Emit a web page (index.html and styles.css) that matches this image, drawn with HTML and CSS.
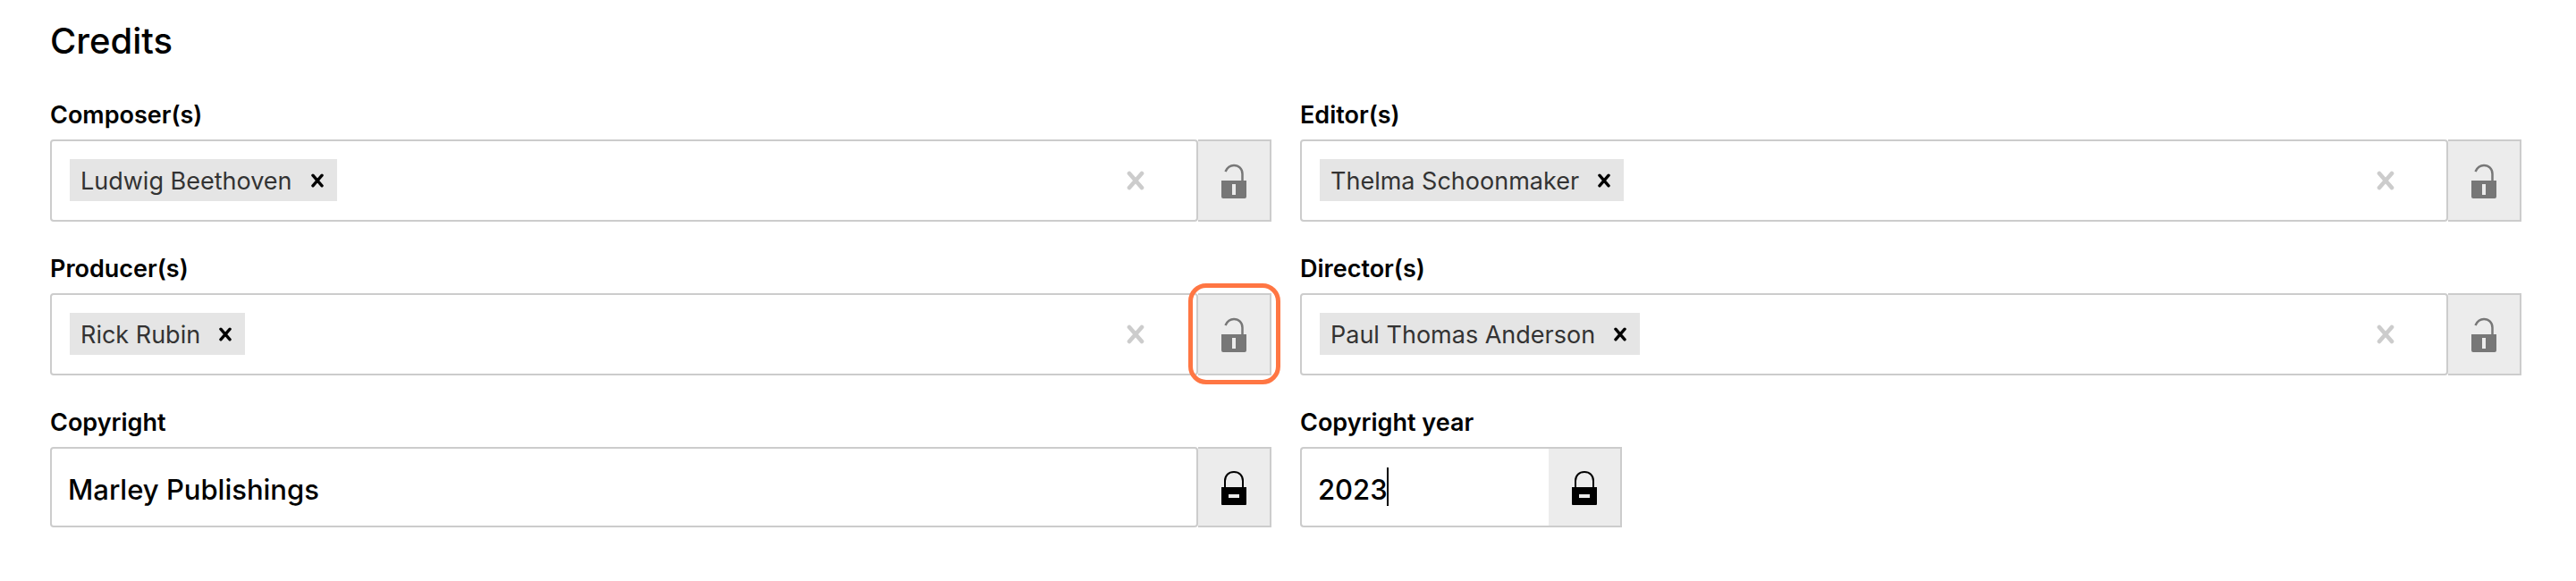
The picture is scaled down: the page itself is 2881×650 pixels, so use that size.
FILE: index.html
```html
<!DOCTYPE html>
<html lang="en">
	<head>
		<meta charset="utf-8">
		<title>Credits</title>
		<meta name="viewport" content="width=device-width,initial-scale=1">
		<link rel="stylesheet" href="styles.css">
	</head>
	<body>
		<!-- shared icons -->
		<svg class="sprite" aria-hidden="true">
			<symbol id="unlocked" viewBox="0 0 28 40">
				<path d="M4.500 10C6.500 5.500 10 3 14 3C19.500 3 23.500 7 23.500 12.500V21" fill="none" stroke="currentColor" stroke-width="2.500"/>
				<path d="M0 20H28V38Q28 40 26 40H2Q0 40 0 38ZM12 24V36H16V24Z" fill="currentColor" fill-rule="evenodd"/>
			</symbol>
			<symbol id="locked" viewBox="0 0 28 40">
				<path d="M4 21V13C4 7 8 3 14 3C20 3 24 7 24 13V21" fill="none" stroke="currentColor" stroke-width="2"/>
				<path d="M0 20H28V39Q28 40 27 40H1Q0 40 0 39ZM8 28V32H20V28Z" fill="currentColor" fill-rule="evenodd"/>
			</symbol>
			<symbol id="cross" viewBox="0 0 20 22">
				<path d="M3 3L17 19M17 3L3 19" fill="none" stroke="currentColor" stroke-width="4.600" stroke-linecap="round"/>
			</symbol>
		</svg>

		<form class="credits">
			<h1 class="title">Credits</h1>
			<div class="fields">
				<div class="field">
					<label class="label" for="composers">Composer(s)</label>
					<div class="row">
						<div class="control select">
							<span class="tag">Ludwig Beethoven<button type="button" class="remove" aria-label="Remove Ludwig Beethoven"><svg><use href="#cross"/></svg></button></span>
							<input class="search" id="composers" type="text">
							<button type="button" class="clear" aria-label="Clear composers"><svg><use href="#cross"/></svg></button>
						</div>
						<button type="button" class="lock" aria-label="Lock composers"><svg><use href="#unlocked"/></svg></button>
					</div>
				</div>

				<div class="field">
					<label class="label" for="editors">Editor(s)</label>
					<div class="row">
						<div class="control select">
							<span class="tag">Thelma Schoonmaker<button type="button" class="remove" aria-label="Remove Thelma Schoonmaker"><svg><use href="#cross"/></svg></button></span>
							<input class="search" id="editors" type="text">
							<button type="button" class="clear" aria-label="Clear editors"><svg><use href="#cross"/></svg></button>
						</div>
						<button type="button" class="lock" aria-label="Lock editors"><svg><use href="#unlocked"/></svg></button>
					</div>
				</div>

				<div class="field">
					<label class="label" for="producers">Producer(s)</label>
					<div class="row">
						<div class="control select">
							<span class="tag">Rick Rubin<button type="button" class="remove" aria-label="Remove Rick Rubin"><svg><use href="#cross"/></svg></button></span>
							<input class="search" id="producers" type="text">
							<button type="button" class="clear" aria-label="Clear producers"><svg><use href="#cross"/></svg></button>
						</div>
						<button type="button" class="lock highlight" aria-label="Lock producers"><svg><use href="#unlocked"/></svg></button>
					</div>
				</div>

				<div class="field">
					<label class="label" for="directors">Director(s)</label>
					<div class="row">
						<div class="control select">
							<span class="tag">Paul Thomas Anderson<button type="button" class="remove" aria-label="Remove Paul Thomas Anderson"><svg><use href="#cross"/></svg></button></span>
							<input class="search" id="directors" type="text">
							<button type="button" class="clear" aria-label="Clear directors"><svg><use href="#cross"/></svg></button>
						</div>
						<button type="button" class="lock" aria-label="Lock directors"><svg><use href="#unlocked"/></svg></button>
					</div>
				</div>

				<div class="field">
					<label class="label" for="copyright">Copyright</label>
					<div class="row">
						<input class="control text" id="copyright" type="text" value="Marley Publishings">
						<button type="button" class="lock locked" aria-label="Unlock copyright"><svg><use href="#locked"/></svg></button>
					</div>
				</div>

				<div class="field year">
					<label class="label" for="year">Copyright year</label>
					<div class="row">
						<input class="control text" id="year" type="text" value="2023">
						<span class="caret"></span>
						<button type="button" class="lock locked" aria-label="Unlock copyright year"><svg><use href="#locked"/></svg></button>
					</div>
				</div>
			</div>
		</form>
	</body>
</html>
```
FILE: styles.css
```css
* {
	box-sizing: border-box;
	margin: 0;
	padding: 0;
}

body {
	background: #fff;
	color: #000;
	font-family: Inter, sans-serif;
	font-size: 27px;
	line-height: 36px;
}

button, input {
	font: inherit;
	color: inherit;
	border: 0;
	background: none;
}

button {
	cursor: pointer;
}

svg {
	display: block;
}

.sprite {
	position: absolute;
	width: 0;
	height: 0;
}

.credits {
	padding: 22px 61px 56px 56px;
}

.title {
	font-size: 40px;
	font-weight: 500;
	line-height: 48px;
	margin-bottom: 40px;
}

.fields {
	display: grid;
	grid-template-columns: 1fr 1fr;
	gap: 34px 32px;
}

.label {
	display: block;
	width: fit-content;
	padding-top: 1px;
	font-weight: 600;
	margin-bottom: 9px;
}

.row {
	display: flex;
	position: relative;
}

.control {
	flex: 1;
	min-width: 0;
	border: 2px solid #ccc;
	border-radius: 4px;
}

.select {
	display: flex;
	align-items: flex-start;
	height: 92px;
	padding: 20px;
}

.tag {
	display: flex;
	align-items: center;
	height: 47px;
	padding: 3px 12px 0 12px;
	background: #e5e5e5;
	color: #333;
	white-space: nowrap;
}

.remove {
	margin: 0 0 2px 18px;
	padding: 2px;
	color: #000;
}

.remove svg {
	width: 16px;
	height: 16px;
}

.search {
	flex: 1;
	min-width: 0;
	height: 47px;
	outline: none;
}

.clear {
	align-self: center;
	padding: 0 38px 0 10px;
	color: #ccc;
}

.clear svg {
	width: 20px;
	height: 22px;
}

.lock {
	display: flex;
	align-items: center;
	justify-content: center;
	flex: none;
	position: relative;
	width: 82px;
	border: 2px solid #ccc;
	border-left: 0;
	background: #ececec;
	color: #777;
}

.lock svg {
	width: 28px;
	height: 40px;
}

.locked {
	color: #000;
}

.highlight::after {
	content: "";
	position: absolute;
	inset: -13px -12px -12px -11px;
	border: 5px solid #ff7643;
	border-radius: 20px;
}

.text {
	height: 90px;
	padding: 4px 18px 0;
	font-size: 31px;
	font-weight: 500;
	outline: none;
}

.year {
	width: 360px;
}

.year .control {
	border-right: 0;
	border-radius: 4px 0 0 4px;
}

.caret {
	position: absolute;
	left: 97px;
	top: 23px;
	width: 2px;
	height: 43px;
	background: #000;
}
```
